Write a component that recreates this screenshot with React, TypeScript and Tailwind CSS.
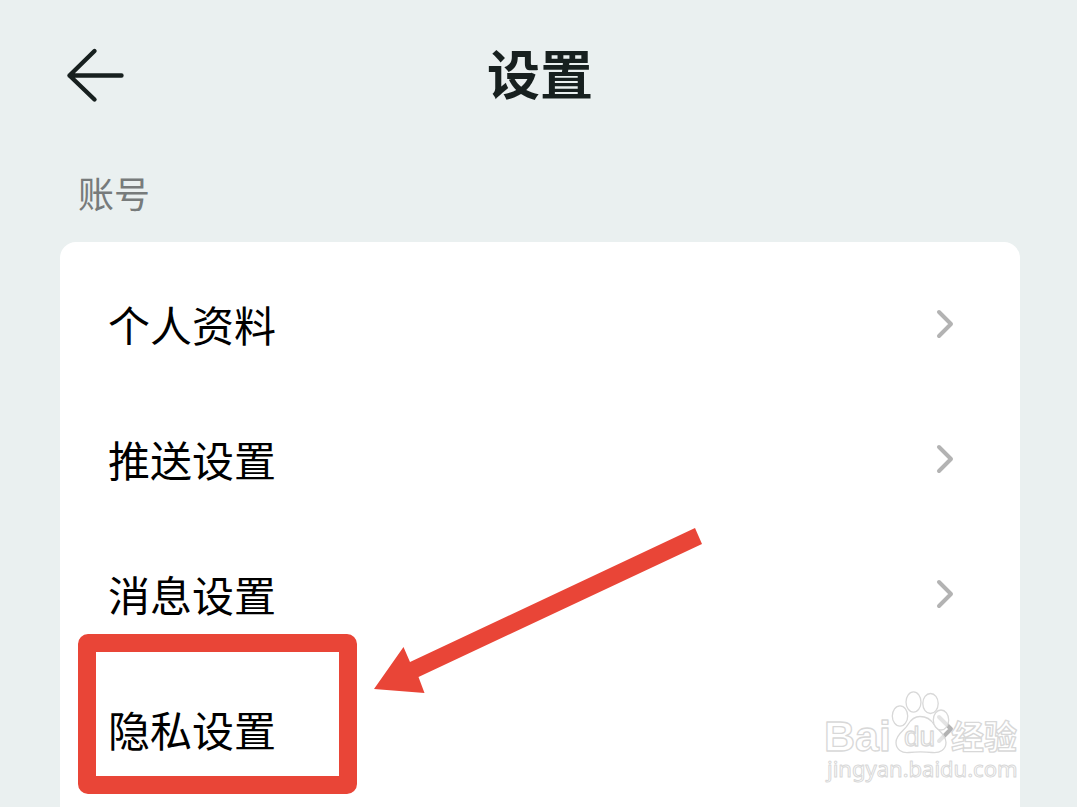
const items = ["个人资料", "推送设置", "消息设置", "隐私设置"];

function BackArrow() {
  return (
    <svg
      width="64"
      height="56"
      viewBox="0 0 64 56"
      fill="none"
      stroke="#17201f"
      strokeWidth="4.4"
      strokeLinecap="round"
      strokeLinejoin="round"
      aria-hidden="true"
    >
      <path d="M34.5 4 9.5 28.500l25 24M9.500 28.500H61.500" />
    </svg>
  );
}

function Chevron() {
  return (
    <svg
      width="20"
      height="32"
      viewBox="0 0 20 32"
      fill="none"
      stroke="#b3b3b3"
      strokeWidth="4"
      strokeLinecap="round"
      strokeLinejoin="round"
      aria-hidden="true"
    >
      <path d="M3 4 15 16 3 28" />
    </svg>
  );
}

function Watermark() {
  return (
    <svg
      width="200"
      height="96"
      viewBox="0 0 200 96"
      className="pointer-events-none absolute top-[446px] right-0"
      fill="#fff"
      fillOpacity="0.65"
      stroke="#d8d8d8"
      strokeWidth="1.3"
      strokeLinejoin="round"
    >
      <text x="4" y="63" fontSize="43" className="font-['Liberation_Sans'] font-bold">
        Bai
      </text>
      <ellipse cx="80" cy="28" rx="7.700" ry="10.200" />
      <ellipse cx="93.500" cy="14" rx="7.500" ry="10.200" />
      <ellipse cx="110.500" cy="15.500" rx="7.700" ry="10" />
      <path d="M100 28.500c-6 0-9 3-12 8-3 6-12 9-12 18 0 7 6 11 13 10 8-1 15-1 23 0 8 1 14-3 14-10 0-8-8-12-12-18-3-5-7-8-14-8Z" />
      <ellipse cx="121" cy="32" rx="7.700" ry="10" />
      <text x="84" y="58" fontSize="28" className="font-['Liberation_Sans']">
        du
      </text>
      <text x="131" y="61" fontSize="33" className="font-['Noto_Sans_CJK_SC'] font-bold">
        经验
      </text>
      <text x="7" y="89" fontSize="22" strokeWidth="1" className="font-['Noto_Sans']">
        jingyan.baidu.com
      </text>
    </svg>
  );
}

export default function App() {
  return (
    <div className="flex h-screen flex-col overflow-hidden bg-[#eaf0f0] pr-[57px] pl-[60px] font-['Noto_Sans_CJK_SC',sans-serif]">
      <header className="grid h-[150px] shrink-0 grid-cols-[64px_1fr_64px] items-center">
        <button type="button" aria-label="返回">
          <BackArrow />
        </button>
        <h1 className="pb-1.5 text-center text-[53px] leading-none font-bold text-[#17201f]">设置</h1>
      </header>

      <h2 className="h-[92px] shrink-0 pt-3.5 pl-[18px] text-4xl leading-[56px] text-[#777b7b]">账号</h2>

      <main className="relative flex-1 rounded-t-2xl bg-white pt-3.5">
        <ul>
          {items.map((item) => (
            <li key={item}>
              <a href="#" className="flex h-[135px] items-center justify-between pr-16 pl-12 text-[42px] text-black">
                {item}
                <Chevron />
              </a>
            </li>
          ))}
        </ul>

        {/* Highlight around the privacy row */}
        <div className="pointer-events-none absolute top-[392px] left-[18px] h-[160px] w-[279px] rounded-[10px] border-[18px] border-[#e94537]" />
        <svg
          width="330"
          height="168"
          viewBox="0 0 330 168"
          className="pointer-events-none absolute top-[285px] left-[313px]"
          aria-hidden="true"
        >
          <path d="M1 162 30.500 120l6.500 15L322 1l7 16L45.500 150l6 16Z" fill="#e94537" />
        </svg>
        <Watermark />
      </main>
    </div>
  );
}
